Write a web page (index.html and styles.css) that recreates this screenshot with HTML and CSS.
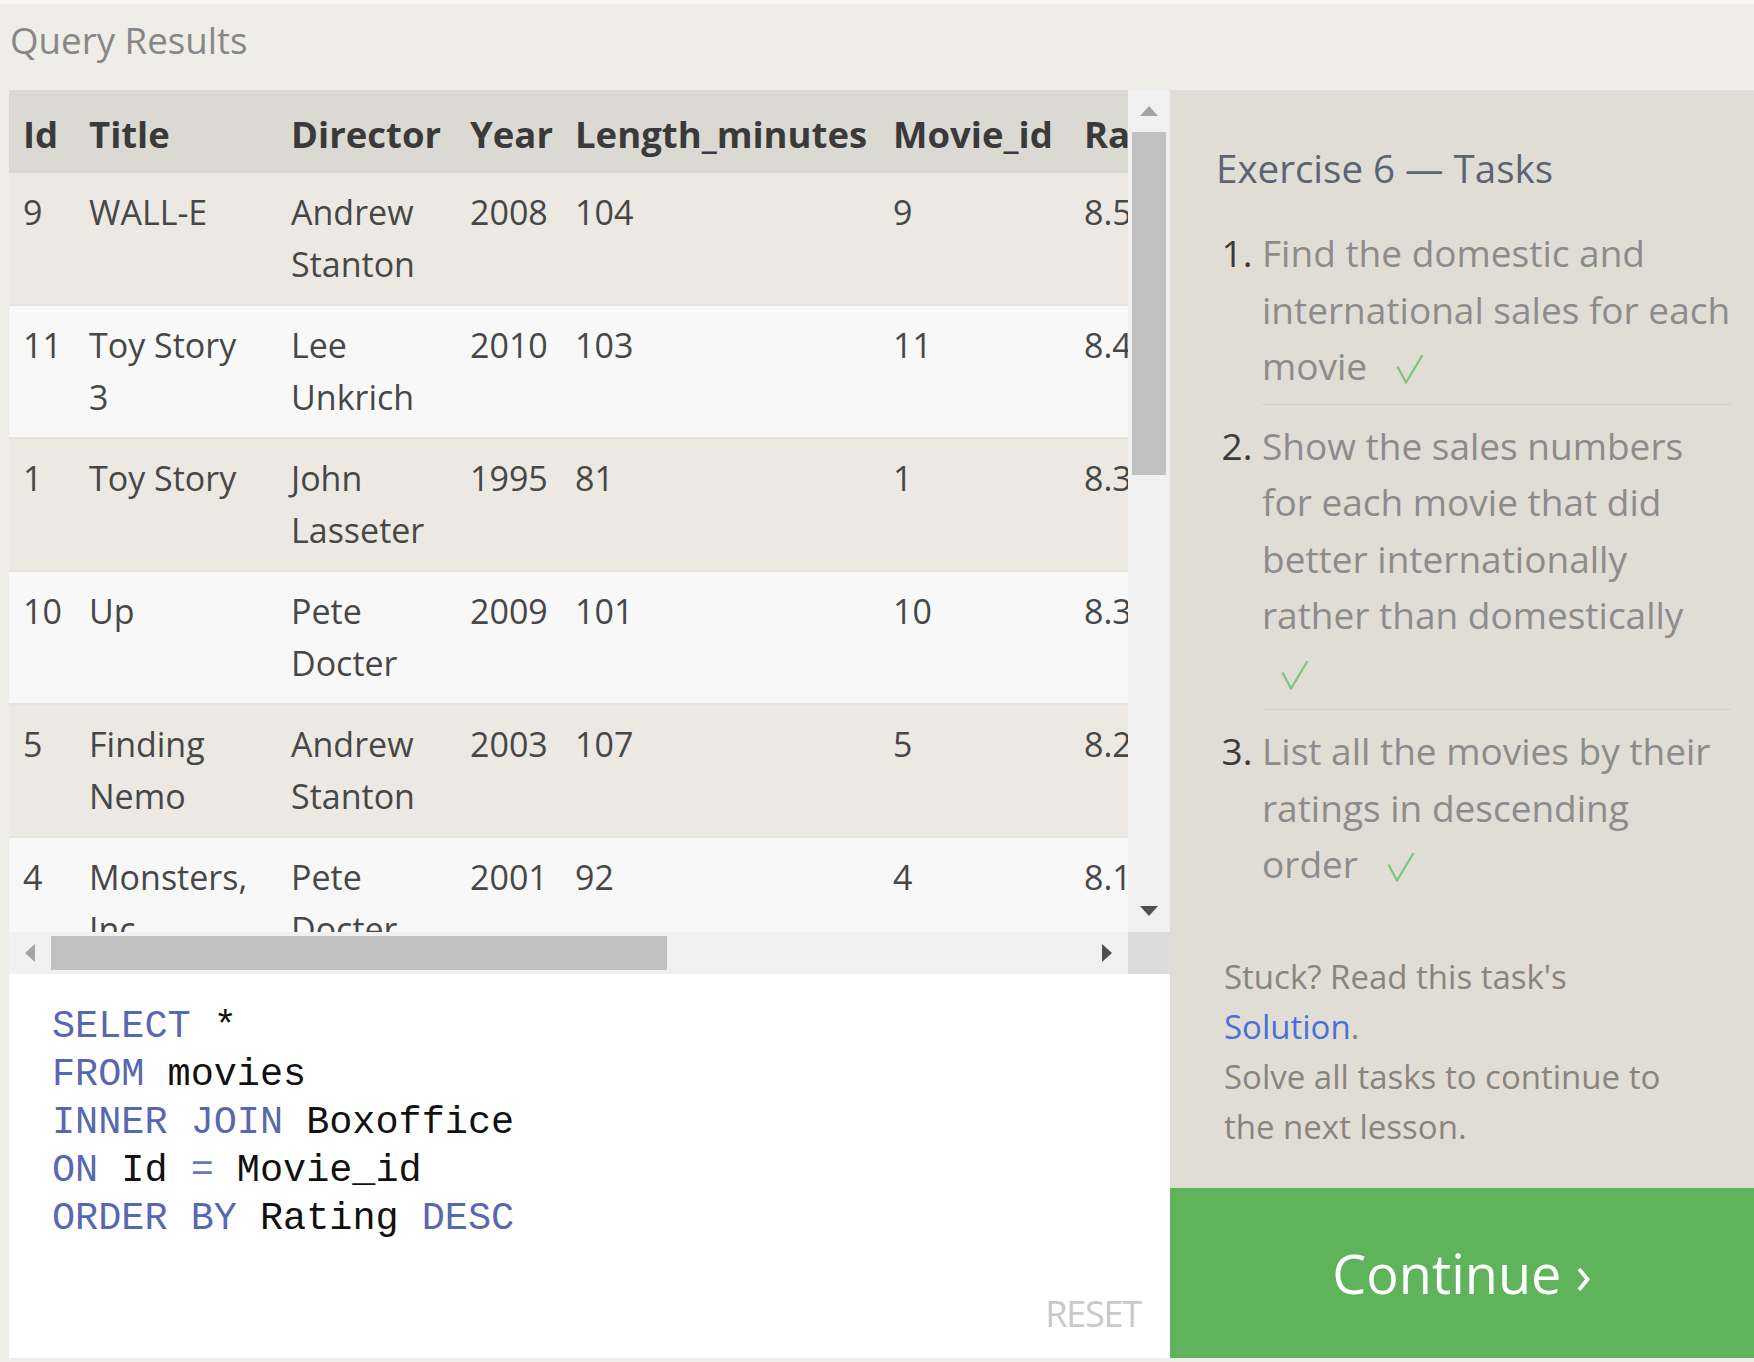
FILE: index.html
```html
<!DOCTYPE html>
<html lang="en">
<head>
<meta charset="utf-8">
<title>SQL Lesson - Query Results</title>
<link rel="stylesheet" href="styles.css">
</head>
<body>
<div class="page">
  <h2 class="results-title">Query Results</h2>
  <div class="workspace">
    <section class="left">
      <div class="results">
        <div class="table-view">
          <table class="grid">
            <colgroup>
              <col class="c-id"><col class="c-title"><col class="c-dir"><col class="c-year"><col class="c-len"><col class="c-mid"><col class="c-rat"><col class="c-dom"><col class="c-int">
            </colgroup>
            <thead>
              <tr><th>Id</th><th>Title</th><th>Director</th><th>Year</th><th>Length_minutes</th><th>Movie_id</th><th>Rating</th><th>Domestic_sales</th><th>International_sales</th></tr>
            </thead>
            <tbody>
              <tr><td>9</td><td>WALL-E</td><td>Andrew Stanton</td><td>2008</td><td>104</td><td>9</td><td>8.5</td><td>223808164</td><td>297503696</td></tr>
              <tr><td>11</td><td>Toy Story 3</td><td>Lee Unkrich</td><td>2010</td><td>103</td><td>11</td><td>8.4</td><td>415004880</td><td>648167031</td></tr>
              <tr><td>1</td><td>Toy Story</td><td>John Lasseter</td><td>1995</td><td>81</td><td>1</td><td>8.3</td><td>191796233</td><td>170162503</td></tr>
              <tr><td>10</td><td>Up</td><td>Pete Docter</td><td>2009</td><td>101</td><td>10</td><td>8.3</td><td>293004164</td><td>438338580</td></tr>
              <tr><td>5</td><td>Finding Nemo</td><td>Andrew Stanton</td><td>2003</td><td>107</td><td>5</td><td>8.2</td><td>380843261</td><td>555900000</td></tr>
              <tr><td>4</td><td>Monsters, Inc.</td><td>Pete Docter</td><td>2001</td><td>92</td><td>4</td><td>8.1</td><td>289916256</td><td>272900000</td></tr>
              <tr><td>8</td><td>Ratatouille</td><td>Brad Bird</td><td>2007</td><td>115</td><td>8</td><td>8</td><td>206445654</td><td>417277164</td></tr>
              <tr><td>6</td><td>The Incredibles</td><td>Brad Bird</td><td>2004</td><td>116</td><td>6</td><td>8</td><td>261441092</td><td>370001000</td></tr>
            </tbody>
          </table>
        </div>
        <div class="vbar">
          <div class="sb-btn"><svg width="18" height="10" viewBox="0 0 18 10"><polygon points="0,10 18,10 9,0" fill="#a3a3a3"/></svg></div>
          <div class="vthumb"></div>
          <div class="sb-fill"></div>
          <div class="sb-btn"><svg width="18" height="10" viewBox="0 0 18 10"><polygon points="0,0 18,0 9,10" fill="#505050"/></svg></div>
        </div>
        <div class="hbar">
          <div class="sb-btn"><svg width="10" height="18" viewBox="0 0 10 18"><polygon points="10,0 10,18 0,9" fill="#a3a3a3"/></svg></div>
          <div class="hthumb"></div>
          <div class="sb-fill"></div>
          <div class="sb-btn"><svg width="10" height="18" viewBox="0 0 10 18"><polygon points="0,0 0,18 10,9" fill="#505050"/></svg></div>
        </div>
        <div class="corner"></div>
      </div>
      <div class="editor">
        <pre class="code"><span class="kw">SELECT</span> *
<span class="kw">FROM</span> movies
<span class="kw">INNER</span> <span class="kw">JOIN</span> Boxoffice
<span class="kw">ON</span> Id <span class="op">=</span> Movie_id
<span class="kw">ORDER</span> <span class="kw">BY</span> Rating <span class="kw">DESC</span></pre>
        <div class="reset">RESET</div>
      </div>
    </section>
    <aside class="side">
      <div class="tasks">
        <h3 class="tasks-title">Exercise 6 — Tasks</h3>
        <ol class="task-list">
          <li>Find the domestic and international sales for each movie <svg class="check" width="28" height="30" viewBox="0 0 28 30"><polyline points="1.5,12.5 10,28.5 26.5,1" fill="none" stroke="#79c779" stroke-width="2.2"/></svg></li>
          <li>Show the sales numbers for each movie that did better internationally rather than domestically <svg class="check" width="28" height="30" viewBox="0 0 28 30"><polyline points="1.5,12.5 10,28.5 26.5,1" fill="none" stroke="#79c779" stroke-width="2.2"/></svg></li>
          <li>List all the movies by their ratings in descending order <svg class="check" width="28" height="30" viewBox="0 0 28 30"><polyline points="1.5,12.5 10,28.5 26.5,1" fill="none" stroke="#79c779" stroke-width="2.2"/></svg></li>
        </ol>
        <p class="stuck">Stuck? Read this task's <a class="solution" href="#">Solution</a>.<br>Solve all tasks to continue to the next lesson.</p>
      </div>
      <button class="continue" type="button">Continue ›</button>
    </aside>
  </div>
</div>
</body>
</html>
```
FILE: styles.css
```css
html, body {
  margin: 0;
  padding: 0;
}

body {
  background: #efede7;
  font-family: "Open Sans", "Noto Sans", sans-serif;
  width: 1754px;
  height: 1362px;
  overflow: hidden;
}

.page {
  border-top: 4px solid #f8f7f4;
  padding-left: 9px;
}

.results-title {
  margin: 0;
  height: 86px;
  line-height: 72px;
  font-size: 36.7px;
  font-weight: 400;
  color: #878787;
  padding-left: 1px;
}

.workspace {
  display: grid;
  grid-template-columns: 1161px 584px;
  height: 1268px;
}

/* ---------- left: results + editor ---------- */
.left {
  display: flex;
  flex-direction: column;
}

.results {
  display: grid;
  grid-template-columns: 1119px 42px;
  grid-template-rows: 842px 42px;
}

.table-view {
  overflow: hidden;
  background: #f8f8f8;
}

.grid {
  border-collapse: collapse;
  table-layout: fixed;
  width: 1772px;
  font-size: 34px;
  line-height: 52px;
  color: #474747;
}

.c-id { width: 66px; }
.c-title { width: 202px; }
.c-dir { width: 179px; }
.c-year { width: 105px; }
.c-len { width: 318px; }
.c-mid { width: 191px; }
.c-rat { width: 150px; }
.c-dom { width: 260px; }
.c-int { width: 301px; }

.grid th {
  background: #dbdad2;
  color: #3a3a3a;
  font-size: 36.5px;
  font-weight: 700;
  text-align: left;
  white-space: nowrap;
  padding: 18px 16px 13px 14px;
}

.grid td {
  text-align: left;
  vertical-align: top;
  padding: 13px 16px 14px 14px;
  border-bottom: 2px solid #e5e4df;
}

.grid tbody tr:nth-child(odd) td {
  background: #ebe9e2;
}

.grid tbody tr:nth-child(even) td {
  background: #f8f8f8;
}

.grid td:nth-child(4),
.grid td:nth-child(5),
.grid td:nth-child(6),
.grid td:nth-child(7) {
  white-space: nowrap;
}

.vbar {
  background: #f0f0f0;
  display: flex;
  flex-direction: column;
  align-items: center;
}

.hbar {
  background: #f0f0f0;
  display: flex;
  flex-direction: row;
  align-items: center;
}

.sb-btn {
  display: flex;
  align-items: center;
  justify-content: center;
  flex: none;
  width: 42px;
  height: 42px;
}

.sb-btn svg {
  display: block;
}

.sb-fill {
  flex: 1;
}

.vthumb {
  width: 34px;
  height: 343px;
  background: #c1c1c1;
  flex: none;
}

.hthumb {
  width: 616px;
  height: 34px;
  background: #c1c1c1;
  flex: none;
}

.corner {
  background: #dcdcdc;
}

.editor {
  flex: 1;
  background: #ffffff;
  display: flex;
  flex-direction: column;
  justify-content: space-between;
  padding: 29px 29px 24px 43px;
}

.code {
  margin: 0;
  font-family: "Liberation Mono", "DejaVu Sans Mono", monospace;
  font-size: 38.5px;
  line-height: 48px;
  color: #111111;
}

.kw {
  color: #5868b0;
}

.op {
  color: #6878bc;
}

.reset {
  align-self: flex-end;
  font-size: 36px;
  line-height: 40px;
  letter-spacing: -1.2px;
  color: #c9c9c9;
}

/* ---------- right: tasks ---------- */
.side {
  background: #e0ddd5;
  display: flex;
  flex-direction: column;
}

.tasks {
  padding: 52px 23px 0 46px;
}

.tasks-title {
  margin: 0;
  font-size: 38.5px;
  line-height: 52px;
  font-weight: 400;
  color: #5b6375;
}

.task-list {
  margin: 31px 0 0;
  padding: 0 0 0 46px;
  font-size: 37px;
  line-height: 56.5px;
  color: #8c8c8c;
}

.task-list li {
  padding: 13px 0 9px;
  border-bottom: 1px solid #d3d0c8;
}

.task-list li:first-child {
  padding-top: 0;
}

.task-list li:last-child {
  border-bottom: none;
}

.task-list li::marker {
  color: #3b3b3b;
}

.check {
  display: inline-block;
  vertical-align: -4px;
  margin-left: 19px;
}

.stuck {
  margin: 50px 0 0 8px;
  width: 470px;
  font-size: 33px;
  line-height: 50px;
  color: #8b847d;
}

.solution {
  color: #4c6fd8;
  text-decoration: none;
}

.continue {
  margin-top: auto;
  height: 170px;
  border: none;
  background: #5fb35b;
  color: #ffffff;
  font-family: "Open Sans", "Noto Sans", sans-serif;
  font-size: 54px;
  font-weight: 400;
  padding: 0;
  cursor: pointer;
}
```
